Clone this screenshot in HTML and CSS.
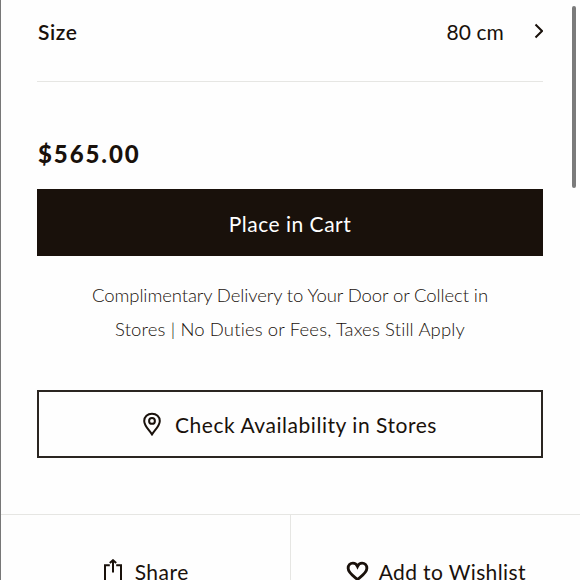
FILE: index.html
```
<!DOCTYPE html>
<html lang="en">
<head>
    <meta charset="UTF-8">
    <meta name="viewport" content="width=device-width, initial-scale=1.0">
    <title>Place in Cart</title>
    <link rel="stylesheet" href="styles.css">
</head>
<body>

    <main class="panel">
        <!-- Purchase options -->
        <section class="details">
            <div class="size-row">
                <span class="size-label">Size</span>
                <span class="size-value">80 cm</span>
                <svg class="chevron" width="9" height="16" viewBox="0 0 9 16">
                    <path d="M1.5 1.5 L8 8 L1.5 14.5"/>
                </svg>
            </div>
            <div class="price">$565.00</div>
            <button class="button cart"><span>Place in Cart</span></button>
            <p class="note">
                <span class="note-first">Complimentary Delivery to Your Door or Collect in</span><br>
                <span class="note-second">Stores | No Duties or Fees, Taxes Still Apply</span>
            </p>
            <button class="button stores">
                <svg width="18" height="24" viewBox="0 0 18 24">
                    <path d="M9 22.4 C6.4 18.3 1.2 13.8 1.2 8.9 C1.2 4.6 4.5 1.7 9 1.7 C13.5 1.7 16.8 4.6 16.8 8.9 C16.8 13.8 11.6 18.3 9 22.4 Z"/>
                    <circle cx="9" cy="8.9" r="2.9"/>
                </svg>
                <span>Check Availability in Stores</span>
            </button>
        </section>

        <!-- Bottom actions -->
        <footer class="actions">
            <a class="action share" href="#">
                <svg width="18" height="25" viewBox="0 0 18 25">
                    <path d="M5.8 6.2 H1 V22 H17 V6.2 H12.2"/>
                    <path d="M9 13.5 V2 M5.8 4 L9 1.2 L12.2 4"/>
                </svg>
                <span>Share</span>
            </a>
            <a class="action wishlist" href="#">
                <svg width="23" height="21" viewBox="0 0 24 22">
                    <path d="M12 19.4 C8 16 2.2 12.3 2.2 7.6 C2.2 4.4 4.4 2.2 7.2 2.2 C9.5 2.2 11 3.4 12 5.6 C13 3.4 14.5 2.2 16.8 2.2 C19.6 2.2 21.8 4.4 21.8 7.6 C21.8 12.3 16 16 12 19.4 Z"/>
                </svg>
                <span>Add to Wishlist</span>
            </a>
        </footer>
    </main>
    <div class="scrollbar"></div>

</body>
</html>
```
FILE: styles.css
```
* {
    box-sizing: border-box;
}
body {
    margin: 0;
    height: 580px;
    overflow: hidden;
    background-color: #fefefe;
    color: #19110b;
    font-family: Lato, "Liberation Sans", sans-serif;
    font-size: 21px;
    font-variant-ligatures: none;
}
svg {
    fill: none;
    stroke: #19110b;
    stroke-width: 2;
    flex-shrink: 0;
}
.panel {
    height: 580px;
    border-left: 1px solid #777;
    overflow: hidden;
}
.details {
    padding: 0 37px 0 36px;
    height: 514px;
}
.size-row {
    display: flex;
    align-items: center;
    height: 82px;
    padding-bottom: 18px;
    border-bottom: 1px solid #e6e6e3;
}
.size-label {
    padding-left: 1px;
    font-weight: 600;
    letter-spacing: 0.6px;
}
.size-value {
    margin-left: auto;
    letter-spacing: 0.1px;
}
.chevron {
    margin: -1px 0 0 30px;
}
.price {
    height: 107px;
    padding: 56px 0 0 1px;
    line-height: 32px;
    font-size: 24px;
    font-weight: 900;
    letter-spacing: 1.9px;
}
.button {
    display: flex;
    align-items: center;
    justify-content: center;
    width: 100%;
    height: 67px;
    padding: 0;
    border: none;
    border-radius: 0;
    background: none;
    color: inherit;
    font: inherit;
    cursor: pointer;
}
.cart {
    padding-top: 1px;
    background-color: #19110b;
    color: #fff;
    letter-spacing: 0.5px;
}
.note {
    margin: 23px 0 44px;
    font-size: 18.5px;
    font-weight: 300;
    line-height: 33.5px;
    text-align: center;
    white-space: nowrap;
}
.note-first {
    letter-spacing: -0.1px;
}
.note-second {
    letter-spacing: 0.14px;
}
.stores {
    gap: 14px;
    height: 68px;
    border: 2px solid #2a2521;
    letter-spacing: 0.54px;
}
.actions {
    display: flex;
    height: 114px;
    border-top: 1px solid #e6e6e3;
}
.action {
    display: flex;
    align-items: center;
    justify-content: center;
    width: 50%;
    color: inherit;
    text-decoration: none;
}
.share {
    gap: 13px;
    padding-left: 2px;
    border-right: 1px solid #e6e6e3;
    letter-spacing: 0.5px;
}
.wishlist {
    gap: 10px;
    padding-left: 1px;
    letter-spacing: 0.38px;
}
.wishlist svg {
    stroke-width: 3;
}
.scrollbar {
    position: absolute;
    top: 6px;
    right: 4px;
    width: 4px;
    height: 182px;
    border-radius: 2px;
    background-color: #7b7b7b;
}
```
